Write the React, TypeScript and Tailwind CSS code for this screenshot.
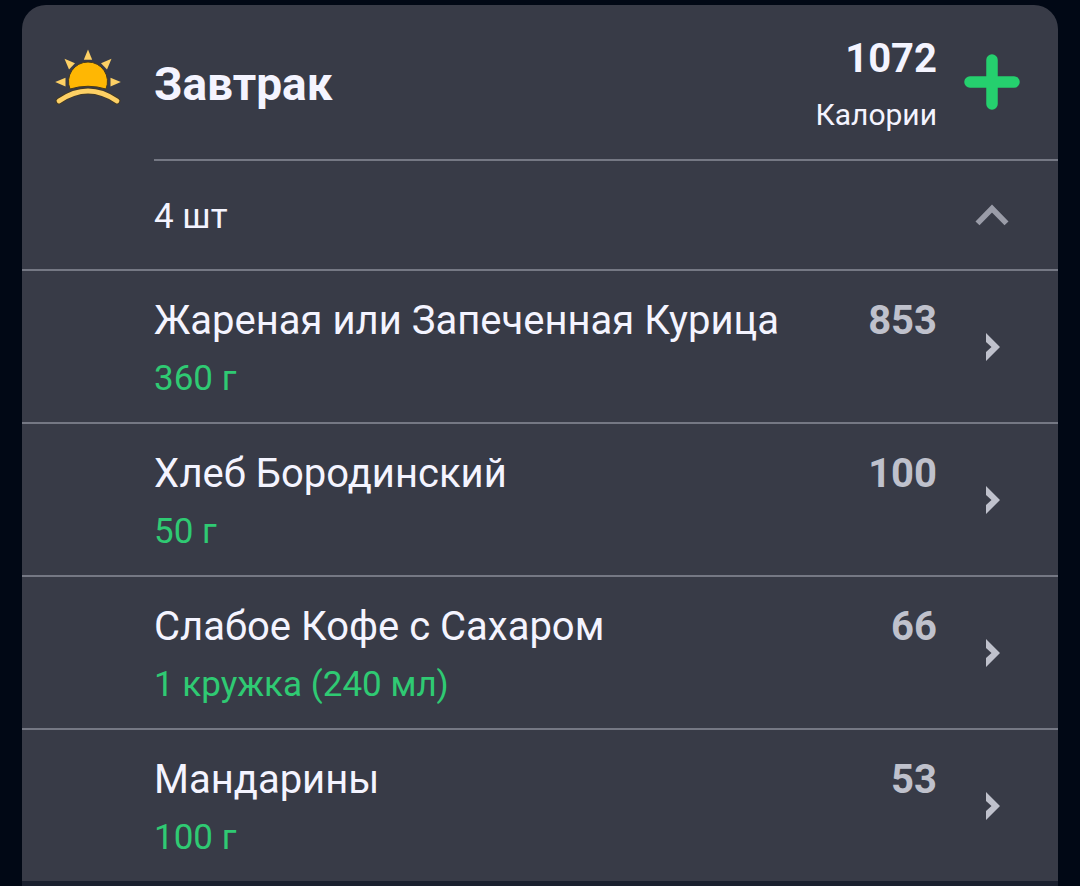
import React, { useState } from 'react';

type FoodItem = {
  name: string;
  amount: string;
  calories: number;
};

const items: FoodItem[] = [
  { name: 'Жареная или Запеченная Курица', amount: '360 г', calories: 853 },
  { name: 'Хлеб Бородинский', amount: '50 г', calories: 100 },
  { name: 'Слабое Кофе с Сахаром', amount: '1 кружка (240 мл)', calories: 66 },
  { name: 'Мандарины', amount: '100 г', calories: 53 },
];

const SunriseIcon = () => (
  <svg className="w-[68px] h-[68px]" viewBox="0 1 68 68" fill="none" aria-hidden="true">
    <path
      d="M16 41A19.500 19.500 0 1 1 52 41Q34 35.500 16 41Z"
      fill="#ffb703"
      stroke="#45391f"
      strokeWidth="1"
    />
    {/* Rays */}
    <g fill="#fdd065">
      <path d="M34 1.500L38.200 11.800H29.800Z" />
      <path d="M10.500 10.800L21 15.300L15 21.600Z" />
      <path d="M57.500 10.800L47 15.300L53 21.600Z" />
      <path d="M1.200 34L11.500 29.800V38.500Z" />
      <path d="M66.800 34L56.500 29.800V38.500Z" />
    </g>
    {/* Horizon */}
    <path d="M5 53Q34 33 63 53" stroke="#45391f" strokeWidth="6.500" strokeLinecap="round" />
    <path d="M5 53Q34 33 63 53" stroke="#fdd065" strokeWidth="4.800" strokeLinecap="round" />
  </svg>
);

const PlusIcon = () => (
  <svg className="w-14 h-14" viewBox="0 0 56 56" fill="none" aria-hidden="true">
    <path d="M28 6V50M6 28H50" stroke="#25d06e" strokeWidth="11.500" strokeLinecap="round" />
  </svg>
);

const ChevronUpIcon = ({ flipped }: { flipped: boolean }) => (
  <svg
    className={flipped ? 'w-9 h-6 rotate-180' : 'w-9 h-6'}
    viewBox="0 0 36 24"
    fill="none"
    aria-hidden="true"
  >
    <path d="M3.500 20.400L18 5.600L32.500 20.400" stroke="#9a9ca8" strokeWidth="5.600" />
  </svg>
);

const ChevronRightIcon = () => (
  <svg className="w-4 h-7" viewBox="0 0 16 28" aria-hidden="true">
    <path d="M2 0L16 14L2 28V19L7.500 14L2 9Z" fill="#bfc1cc" />
  </svg>
);

const App: React.FC = () => {
  const [open, setOpen] = useState(true);
  const total = items.reduce((sum, item) => sum + item.calories, 0);

  return (
    <div className="min-h-screen bg-[#010815] px-[22px] pt-[5px] text-[#f4f4ff] font-[Roboto,sans-serif]">
      <section className="bg-[#383b47] rounded-t-3xl overflow-hidden">
        {/* Meal header */}
        <header className="flex items-stretch">
          <div className="w-[132px] shrink-0 flex items-center justify-center">
            <SunriseIcon />
          </div>
          <div className="flex-1 flex items-center border-b-2 border-[#757884]">
            <h1 className="flex-1 pt-1 text-[46px] leading-[56px] font-bold">Завтрак</h1>
            <div className="pt-[30px] pb-[22px] text-right">
              <p className="text-[40px] leading-[48px] font-bold">{total}</p>
              <p className="mt-3 mb-[2px] text-[30px] leading-[40px]">Калории</p>
            </div>
            <div className="w-[121px] pr-[11px] shrink-0 flex justify-center">
              <button type="button" aria-label="Добавить">
                <PlusIcon />
              </button>
            </div>
          </div>
        </header>

        <button
          type="button"
          onClick={() => setOpen(!open)}
          aria-expanded={open}
          className="w-full h-[110px] flex items-center pl-[132px] text-left border-b-2 border-[#757884]"
        >
          <span className="flex-1 pt-1 text-[35px] leading-[44px]">{items.length} шт</span>
          <span className="w-[121px] pr-[11px] shrink-0 flex justify-center">
            <ChevronUpIcon flipped={!open} />
          </span>
        </button>

        {/* Food list */}
        {open && (
          <ul>
            {items.map((item) => (
              <li key={item.name} className="border-b-2 border-[#757884] last:border-[#1a202e]">
                <button type="button" className="w-full flex items-center pl-[132px] text-left">
                  <span className="flex-1 pt-[26px] pb-[21px]">
                    <span className="flex justify-between text-[40px] leading-[48px]">
                      <span>{item.name}</span>
                      <span className="font-bold text-[#bfc1cc]">{item.calories}</span>
                    </span>
                    <span className="block mt-3 text-[35px] leading-[44px] text-[#2fca73]">{item.amount}</span>
                  </span>
                  <span className="w-[121px] pr-[11px] shrink-0 flex justify-center">
                    <ChevronRightIcon />
                  </span>
                </button>
              </li>
            ))}
          </ul>
        )}
        <div className="h-[3px] bg-[#1a202e]" />
      </section>
    </div>
  );
};

export default App;
